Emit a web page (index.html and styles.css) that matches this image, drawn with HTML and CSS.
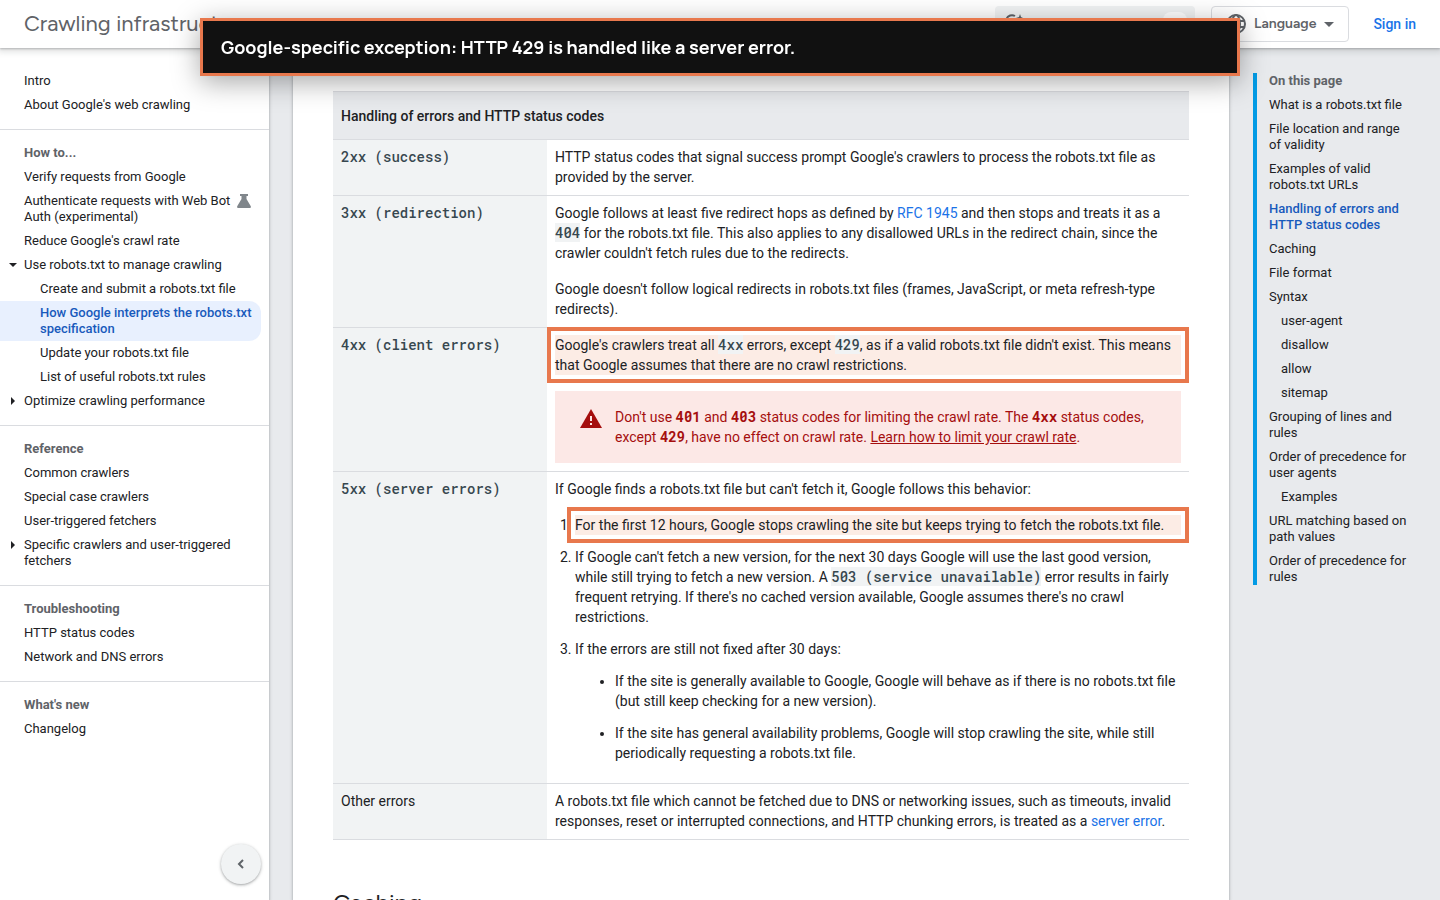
FILE: index.html
```html
<!DOCTYPE html>
<html lang="en">
<head>
    <meta charset="UTF-8">
    <meta name="viewport" content="width=device-width, initial-scale=1.0">
    <title>How Google interprets the robots.txt specification</title>
    <link rel="stylesheet" href="styles.css">
</head>
<body>
    <div class="banner" role="status">Google-specific exception: HTTP 429 is handled like a server error.</div>

    <header class="topbar">
        <a class="product" href="#">Crawling infrastructure</a>
        <div class="tools">
            <button class="search" type="button" aria-label="Search">
                <svg width="20" height="20" viewBox="0 0 20 20" fill="none" stroke="#5f6368" stroke-width="2">
                    <path d="M12 2A6 6 0 1 0 15 8M13 12l5 5"/>
                    <path d="M17 0l1 3 2 1-2 1-1 3-1-3-3-1 3-1z" fill="#5f6368" stroke="none"/>
                </svg>
                <span class="key"></span>
            </button>
            <button class="language" type="button">
                <svg width="20" height="20" viewBox="0 0 20 20" fill="none" stroke="#5f6368" stroke-width="2">
                    <circle cx="10" cy="10" r="9"/>
                    <ellipse cx="10" cy="10" rx="4" ry="9"/>
                    <path d="M2 7h16M2 13h16"/>
                </svg>
                Language
                <svg width="10" height="5" viewBox="0 0 10 5"><path d="M0 0h10L5 5z" fill="#5f6368"/></svg>
            </button>
            <a class="signin" href="#">Sign in</a>
        </div>
    </header>

    <div class="layout">
        <nav class="sidebar" aria-label="Documentation">
            <ul class="section">
                <li><a href="#">Intro</a></li>
                <li><a href="#">About Google's web crawling</a></li>
            </ul>
            <ul class="section">
                <li class="heading">How to...</li>
                <li><a href="#">Verify requests from Google</a></li>
                <li><a class="with-icon" href="#">
                    <span>Authenticate requests with Web Bot Auth (experimental)</span>
                    <svg width="14" height="14" viewBox="0 0 14 14" fill="#80868b"><path d="M3 0h8v2H9.500v3l4.300 7.200Q14.200 14 13 14H1Q-.2 14 .2 12.200L4.500 5V2H3z"/></svg>
                </a></li>
                <li><a href="#">Reduce Google's crawl rate</a></li>
                <li><a class="open" href="#">Use robots.txt to manage crawling</a>
                    <ul class="sub">
                        <li><a href="#">Create and submit a robots.txt file</a></li>
                        <li><a class="active" href="#">How Google interprets the robots.txt specification</a></li>
                        <li><a href="#">Update your robots.txt file</a></li>
                        <li><a href="#">List of useful robots.txt rules</a></li>
                    </ul>
                </li>
                <li><a class="closed" href="#">Optimize crawling performance</a></li>
            </ul>
            <ul class="section">
                <li class="heading">Reference</li>
                <li><a href="#">Common crawlers</a></li>
                <li><a href="#">Special case crawlers</a></li>
                <li><a href="#">User-triggered fetchers</a></li>
                <li><a class="closed" href="#">Specific crawlers and user-triggered fetchers</a></li>
            </ul>
            <ul class="section">
                <li class="heading">Troubleshooting</li>
                <li><a href="#">HTTP status codes</a></li>
                <li><a href="#">Network and DNS errors</a></li>
            </ul>
            <ul class="section">
                <li class="heading">What's new</li>
                <li><a href="#">Changelog</a></li>
            </ul>
            <button class="collapse" type="button" aria-label="Hide side navigation">
                <svg width="8" height="10" viewBox="0 0 8 10" fill="none" stroke="#5f6368" stroke-width="2"><path d="M6 1L2 5l4 4"/></svg>
            </button>
        </nav>

        <main class="article">
            <table>
                <thead>
                    <tr><th colspan="2">Handling of errors and HTTP status codes</th></tr>
                </thead>
                <tbody>
                    <tr>
                        <td><code>2xx (success)</code></td>
                        <td>HTTP status codes that signal success prompt Google's crawlers to process the robots.txt file as provided by the server.</td>
                    </tr>
                    <tr>
                        <td><code>3xx (redirection)</code></td>
                        <td>
                            <p>Google follows at least five redirect hops as defined by <a href="#">RFC 1945</a> and then stops and treats it as a <code>404</code> for the robots.txt file. This also applies to any disallowed URLs in the redirect chain, since the crawler couldn't fetch rules due to the redirects.</p>
                            <p>Google doesn't follow logical redirects in robots.txt files (frames, JavaScript, or meta refresh-type redirects).</p>
                        </td>
                    </tr>
                    <tr>
                        <td><code>4xx (client errors)</code></td>
                        <td>
                            <p class="marked">Google's crawlers treat all <code>4xx</code> errors, except <code>429</code>, as if a valid robots.txt file didn't exist. This means that Google assumes that there are no crawl restrictions.</p>
                            <aside class="warning">
                                <svg width="22" height="19" viewBox="0 0 22 19"><path d="M11 0l11 19H0z" fill="#a50e0e"/><path d="M10 7h2v5h-2zM10 14h2v2h-2z" fill="#fce8e6"/></svg>
                                <div>Don't use <code>401</code> and <code>403</code> status codes for limiting the crawl rate. The <code>4xx</code> status codes, except <code>429</code>, have no effect on crawl rate. <a href="#">Learn how to limit your crawl rate</a>.</div>
                            </aside>
                        </td>
                    </tr>
                    <tr>
                        <td><code>5xx (server errors)</code></td>
                        <td>
                            <p>If Google finds a robots.txt file but can't fetch it, Google follows this behavior:</p>
                            <ol>
                                <li class="marked">For the first 12 hours, Google stops crawling the site but keeps trying to fetch the robots.txt file.</li>
                                <li>If Google can't fetch a new version, for the next 30 days Google will use the last good version, while still trying to fetch a new version. A <code>503 (service unavailable)</code> error results in fairly frequent retrying. If there's no cached version available, Google assumes there's no crawl restrictions.</li>
                                <li>If the errors are still not fixed after 30 days:
                                    <ul>
                                        <li>If the site is generally available to Google, Google will behave as if there is no robots.txt file (but still keep checking for a new version).</li>
                                        <li>If the site has general availability problems, Google will stop crawling the site, while still periodically requesting a robots.txt file.</li>
                                    </ul>
                                </li>
                            </ol>
                        </td>
                    </tr>
                    <tr>
                        <td>Other errors</td>
                        <td>A robots.txt file which cannot be fetched due to DNS or networking issues, such as timeouts, invalid responses, reset or interrupted connections, and HTTP chunking errors, is treated as a <a href="#">server error</a>.</td>
                    </tr>
                </tbody>
            </table>
            <h2>Caching</h2>
        </main>

        <nav class="toc" aria-label="On this page">
            <ul>
                <li class="heading">On this page</li>
                <li><a href="#">What is a robots.txt file</a></li>
                <li><a href="#">File location and range of validity</a></li>
                <li><a href="#">Examples of valid robots.txt URLs</a></li>
                <li><a class="active" href="#">Handling of errors and HTTP status codes</a></li>
                <li><a href="#">Caching</a></li>
                <li><a href="#">File format</a></li>
                <li><a href="#">Syntax</a></li>
                <li class="nested"><a href="#">user-agent</a></li>
                <li class="nested"><a href="#">disallow</a></li>
                <li class="nested"><a href="#">allow</a></li>
                <li class="nested"><a href="#">sitemap</a></li>
                <li><a href="#">Grouping of lines and rules</a></li>
                <li><a href="#">Order of precedence for user agents</a></li>
                <li class="nested"><a href="#">Examples</a></li>
                <li><a href="#">URL matching based on path values</a></li>
                <li><a href="#">Order of precedence for rules</a></li>
            </ul>
        </nav>
    </div>
</body>
</html>
```
FILE: styles.css
```css
* {
    box-sizing: border-box;
}

body {
    margin: 0;
    height: 100vh;
    overflow: hidden;
    display: flex;
    flex-direction: column;
    background: #e8eaed;
    color: #202124;
    font: 14px/20px Roboto, sans-serif;
}

a {
    color: #1a73e8;
    text-decoration: none;
}

button {
    font: inherit;
    cursor: pointer;
}

code {
    font: 500 14px/20px "Roboto Mono", "DejaVu Sans Mono", monospace;
    color: #37474f;
    background: #f1f3f4;
}

/* banner over the page */
.banner {
    position: fixed;
    z-index: 10;
    top: 18px;
    left: 50%;
    transform: translateX(-50%);
    width: calc(100% - 400px);
    padding: 14px 18px;
    background: #111;
    border: 3px solid #e8784d;
    box-shadow: 0 6px 28px rgba(0, 0, 0, 0.35);
    color: #fff;
    font: 700 18px/24px Manrope, Inter, sans-serif;
}

/* top bar */
.topbar {
    position: relative;
    z-index: 2;
    flex: none;
    height: 48px;
    padding: 0 24px;
    display: flex;
    align-items: center;
    justify-content: space-between;
    background: #fff;
    box-shadow: 0 1px 2px rgba(60, 64, 67, 0.3), 0 2px 6px 2px rgba(60, 64, 67, 0.15);
}

.product {
    color: #5f6368;
    font: 22px/32px "Google Sans", Figtree, Outfit, Lato, sans-serif;
}

.tools {
    display: flex;
    align-items: center;
}

.search {
    display: flex;
    align-items: center;
    justify-content: space-between;
    width: 200px;
    height: 36px;
    margin-right: 16px;
    padding: 6px 8px;
    border: 0;
    border-radius: 4px;
    background: #f1f3f4;
}

.key {
    width: 24px;
    height: 24px;
    border-radius: 8px;
    background: #fff;
}

.language {
    display: flex;
    align-items: center;
    gap: 8px;
    height: 36px;
    margin-right: 24px;
    padding: 0 14px;
    border: 1px solid #dadce0;
    border-radius: 4px;
    background: #fff;
    color: #5f6368;
    font: 600 14px/20px "Google Sans", Figtree, Outfit, Roboto, sans-serif;
}

.signin {
    font-weight: 500;
}

/* columns */
.layout {
    flex: 1;
    min-height: 0;
    display: flex;
    gap: 24px;
}

.sidebar,
.toc {
    font-size: 13px;
    line-height: 16px;
}

.sidebar ul,
.toc ul {
    margin: 0;
    padding: 0;
    list-style: none;
}

.sidebar a,
.toc a {
    color: #202124;
}

.heading {
    color: #5f6368;
    font-weight: 700;
}

.sidebar {
    position: relative;
    flex: none;
    width: 269px;
    padding-top: 9px;
    background: #fff;
    box-shadow: 0 1px 2px rgba(60, 64, 67, 0.3), 0 1px 3px 1px rgba(60, 64, 67, 0.15);
}

.sidebar .section {
    padding: 12px 0;
}

.section + .section {
    padding-top: 11px;
    border-top: 1px solid #dadce0;
}

.sidebar a,
.sidebar .heading {
    display: block;
    margin-right: 8px;
    padding: 4px 8px 4px 24px;
}

.sidebar .sub a {
    padding-left: 40px;
}

.sidebar .active {
    border-radius: 0 12px 12px 0;
    background: #e8f0fe;
}

.sidebar .active,
.toc .active {
    color: #185abc;
    font-weight: 500;
}

.sidebar .with-icon {
    display: flex;
    gap: 4px;
}

.with-icon span {
    width: 209px;
}

.with-icon svg {
    margin-top: 1px;
}

.open,
.closed {
    position: relative;
}

.open::before,
.closed::before {
    content: "";
    position: absolute;
    border: 4px solid transparent;
}

.open::before {
    left: 9px;
    top: 10px;
    border-top-color: #202124;
    border-bottom: 0;
}

.closed::before {
    left: 11px;
    top: 8px;
    border-left-color: #202124;
    border-right: 0;
}

.collapse {
    position: absolute;
    right: 8px;
    bottom: 16px;
    width: 40px;
    height: 40px;
    padding: 0;
    display: flex;
    align-items: center;
    justify-content: center;
    border: 0;
    border-radius: 50%;
    background: #f1f3f4;
    box-shadow: 0 1px 2px rgba(60, 64, 67, 0.3), 0 1px 3px 1px rgba(60, 64, 67, 0.15);
}

/* article */
.article {
    flex: 1;
    min-width: 0;
    padding: 43px 40px 0;
    overflow: hidden;
    background: #fff;
    box-shadow: 0 1px 2px rgba(60, 64, 67, 0.3), 0 1px 3px 1px rgba(60, 64, 67, 0.15);
}

table {
    width: 100%;
    border-spacing: 0;
    border-bottom: 1px solid #dadce0;
}

th,
td {
    border-top: 1px solid #dadce0;
    text-align: left;
    vertical-align: top;
}

th {
    padding: 14px 8px 13px;
    background: #e8eaed;
    font-weight: 500;
}

td {
    padding: 7px 8px 8px;
}

td:first-child {
    width: 25%;
    background: #f1f3f4;
}

td p {
    margin: 16px 0;
}

td > :first-child {
    margin-top: 0;
}

td > :last-child {
    margin-bottom: 0;
}

.marked {
    outline: 4px solid #e8784d;
    outline-offset: 4px;
    background: #fcece5;
}

.warning {
    display: flex;
    gap: 13px;
    padding: 16px 24px 16px 25px;
    background: #fce8e6;
    color: #a50e0e;
}

.warning svg {
    flex: none;
    margin-top: 2px;
}

.warning code {
    background: none;
    color: inherit;
    font-weight: 700;
}

.warning a {
    color: inherit;
    text-decoration: underline;
}

ol {
    margin: 12px 0;
    padding-left: 20px;
}

td ul {
    margin: 12px 0;
    padding-left: 40px;
    list-style: disc;
}

td li {
    margin: 12px 0;
}

h2 {
    margin: 47px 0 20px;
    font: 24px/32px "Google Sans", Figtree, Outfit, Lato, sans-serif;
}

/* page contents */
.toc {
    flex: none;
    width: 187px;
    padding: 25px 28px 0 0;
}

.toc ul {
    padding-left: 12px;
    border-left: 4px solid #039be5;
}

.toc li + li {
    margin-top: 8px;
}

.toc .nested {
    padding-left: 12px;
}
```
